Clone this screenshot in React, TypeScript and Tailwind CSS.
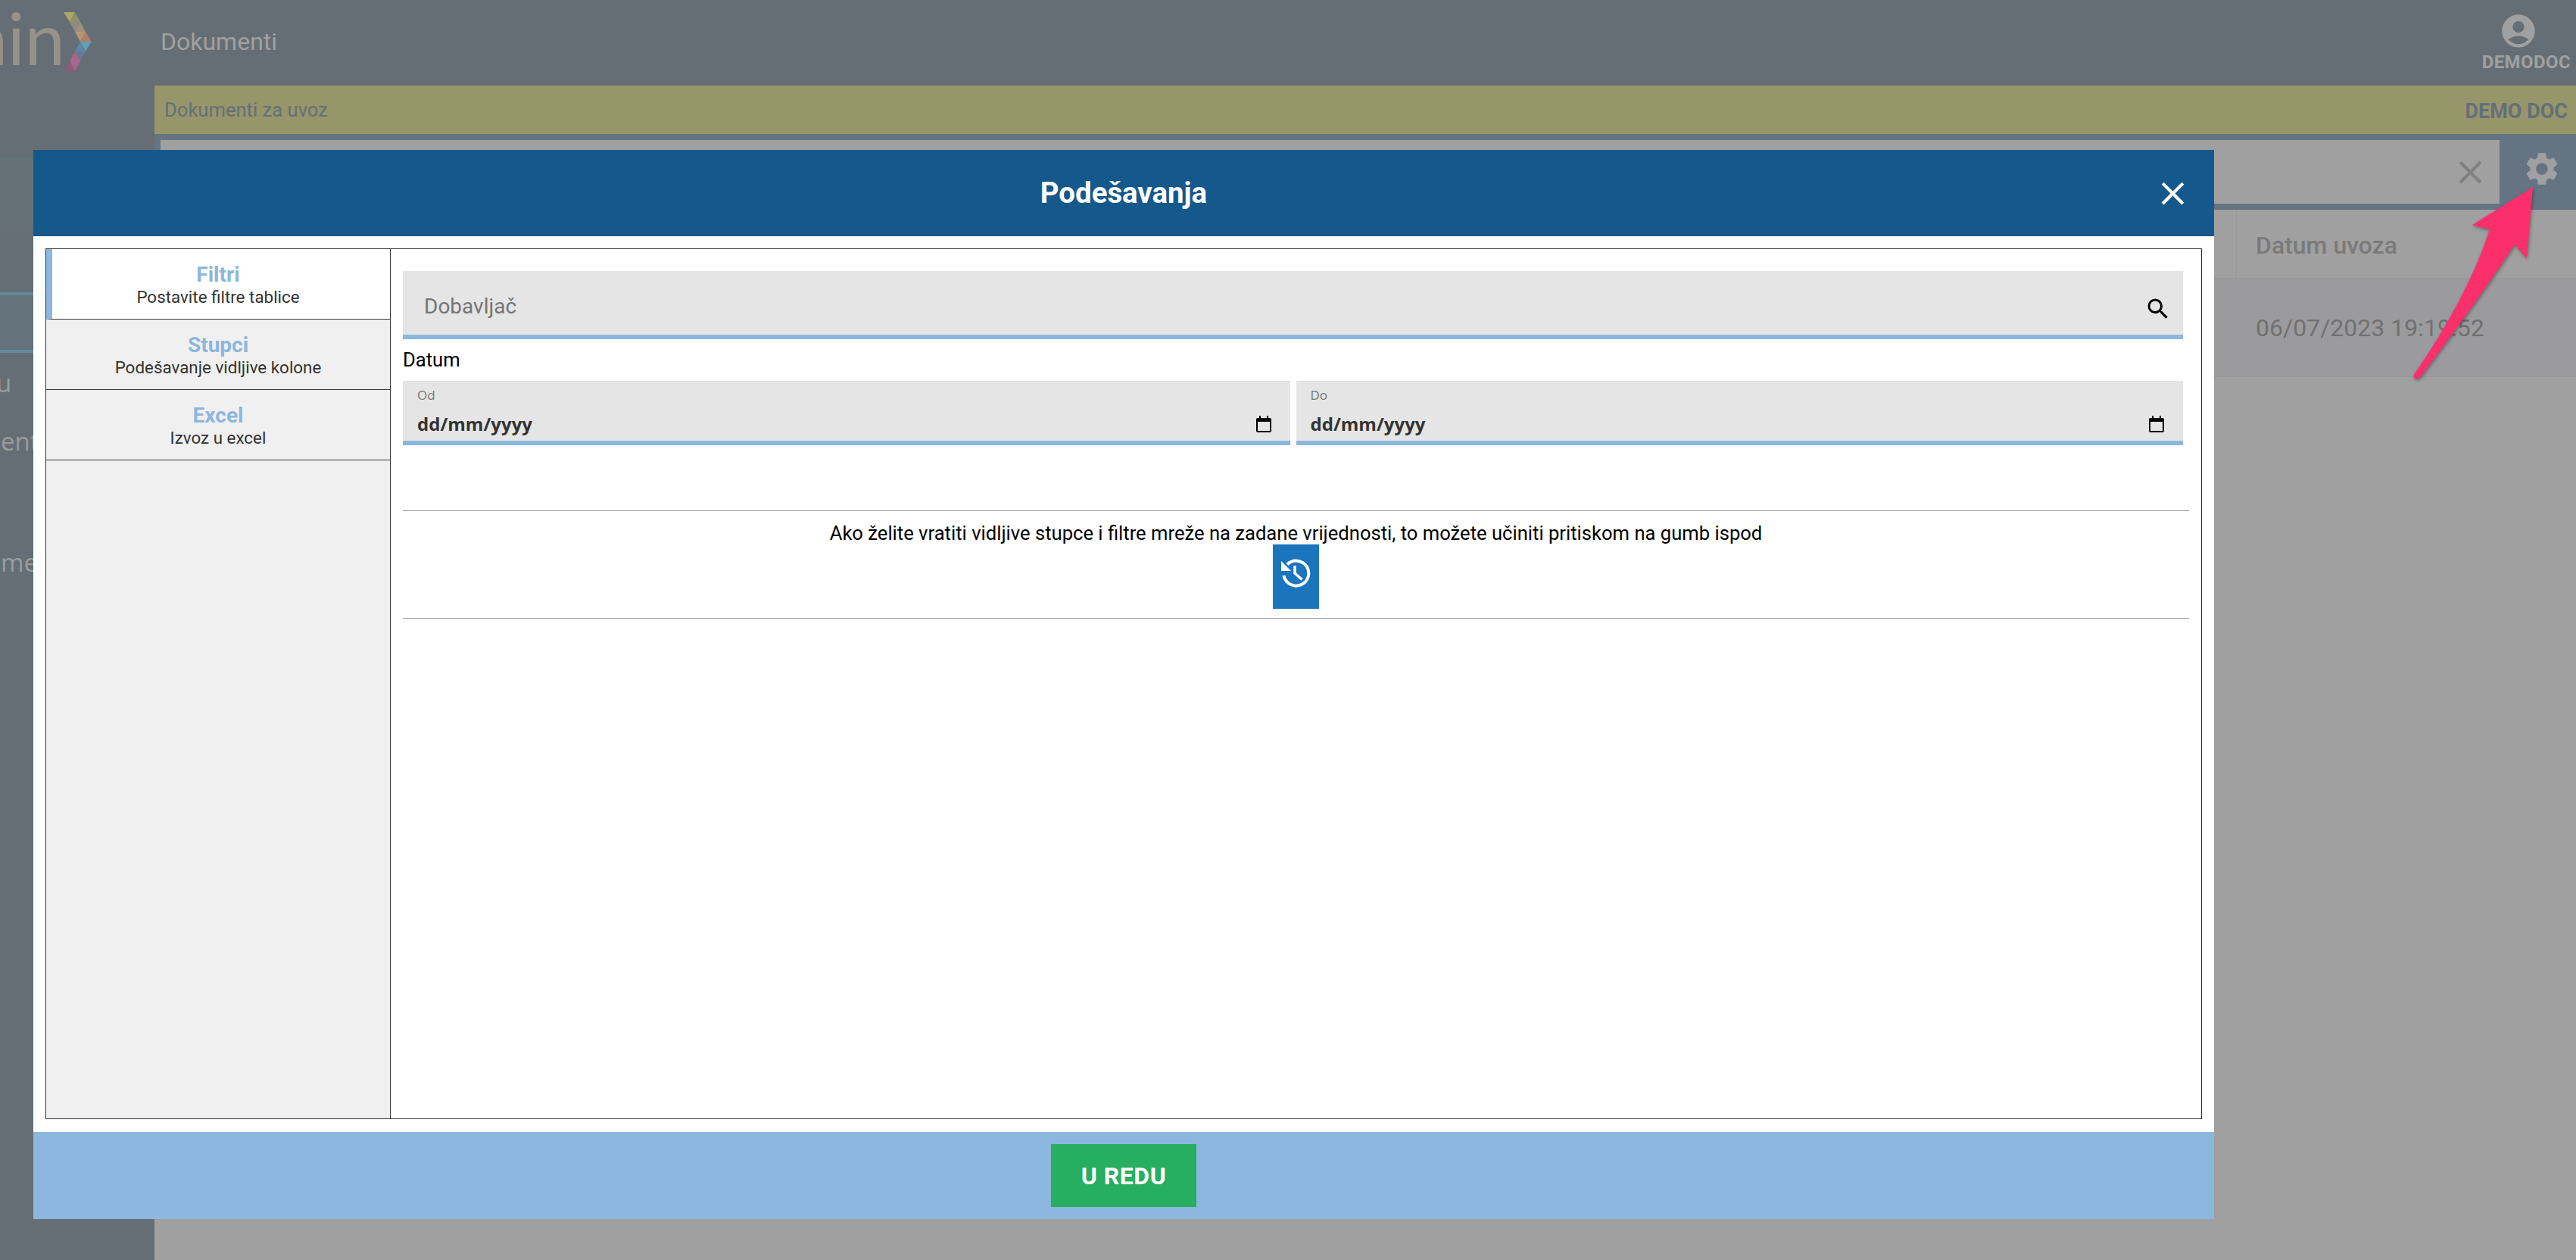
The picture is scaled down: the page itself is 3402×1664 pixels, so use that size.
import { ReactNode } from 'react';
import { MdAccountCircle, MdClose, MdSearch, MdSettings } from 'react-icons/md';

// Chrome's date picker glyph
function CalendarIcon() {
  return (
    <svg width="20" height="22" viewBox="0 0 20 22" fill="none" className="shrink-0">
      <path d="M4 0h2v3h8V0h2v3h2a2 2 0 0 1 2 2v15a2 2 0 0 1-2 2H2a2 2 0 0 1-2-2V5a2 2 0 0 1 2-2h2z" fill="#000" />
      <rect x="2" y="8" width="16" height="12" fill="#e5e5e5" />
    </svg>
  );
}

function HistoryIcon() {
  return (
    <svg width="40" height="40" viewBox="0 0 40 40" fill="none" stroke="#fff" strokeWidth="4">
      <path d="M3.5 22A16.5 16.5 0 1 0 8 7.5" />
      <polygon points="0,3 0,16 13,16" fill="#fff" stroke="none" />
      <path d="M18 9V19L27.5 27.5" strokeWidth="3.5" />
    </svg>
  );
}

function LogoChevron() {
  return (
    <svg width="40" height="80" viewBox="86 14 40 80" className="shrink-0">
      <polygon points="87,15 102,15 95,28" fill="#aaa866" />
      <polygon points="102,15 109,28 95,28" fill="#8f8f6a" />
      <polygon points="95,28 109,28 102,41" fill="#8f8a82" />
      <polygon points="109,28 116,41 102,41" fill="#a0907c" />
      <polygon points="102,41 116,41 109,54" fill="#b09a70" />
      <polygon points="116,41 124,54 109,54" fill="#b07f68" />
      <polygon points="109,54 124,54 116,67" fill="#5f9eb6" />
      <polygon points="109,54 116,67 102,67" fill="#5f86a6" />
      <polygon points="102,67 116,67 109,80" fill="#6a7796" />
      <polygon points="102,67 109,80 95,80" fill="#a86688" />
      <polygon points="95,80 109,80 102,93" fill="#a8668a" />
      <polygon points="95,80 102,93 87,93" fill="#8c5c78" />
    </svg>
  );
}

function SideItem({ children, className }: { children: ReactNode; className: string }) {
  return (
    <div className={`whitespace-nowrap text-[33px] leading-[40px] text-[#9a9c9e] [font-family:'Open_Sans',sans-serif] ${className}`}>
      {children}
    </div>
  );
}

function Sidebar() {
  return (
    <aside className="flex w-[204px] shrink-0 flex-col overflow-hidden">
      <div className="flex h-[209px] items-start">
        <div className="mt-[-8px] ml-[-43px] flex items-start">
          <span className="text-[95px] leading-[115px] text-[#96928a] [font-family:Lato,sans-serif]">nin</span>
          <div className="mt-[23px] ml-[-3px]">
            <LogoChevron />
          </div>
        </div>
      </div>
      <div className="h-[96px] bg-[#647278]" />
      <div className="h-[81px]" />
      <div className="h-[4px] bg-[#65899d]" />
      <div className="h-[72px] bg-[#64727a]" />
      <div className="h-[4px] bg-[#65899d]" />
      <SideItem className="mt-[20px] ml-[-5px]">u</SideItem>
      <SideItem className="mt-[37px] ml-[1px]">ent</SideItem>
      <SideItem className="mt-[120px] ml-[1px]">me</SideItem>
    </aside>
  );
}

function MainBehind() {
  return (
    <main className="flex min-w-0 flex-1 flex-col">
      <header className="flex h-[113px] items-start justify-between">
        <h1 className="mt-[36px] ml-[8px] text-[32px] leading-[38px] text-[#a0a0a0]">Dokumenti</h1>
        <div className="mr-[7px] flex flex-col items-end">
          <div className="mt-[15px] mr-[43px] text-[#a0a0a0]">
            <MdAccountCircle size={52} />
          </div>
          <span className="mt-[1px] text-[24px] leading-[28px] font-bold tracking-[0.4px] text-[#a0a0a0]">DEMODOC</span>
        </div>
      </header>

      <div className="flex h-[64px] items-center justify-between bg-[#96966a] pr-[11px] pl-[13px] text-[#646f78]">
        <span className="text-[25.6px]">Dokumenti za uvoz</span>
        <span className="mt-[4px] text-[27px] font-bold">DEMO DOC</span>
      </div>

      <div className="flex h-[100px] bg-[#647483] pt-[8px] pl-[8px]">
        <div className="flex h-[84px] flex-1 items-center justify-end bg-[#a0a0a0] pr-[13px] text-[#808080]">
          <MdClose size={51} />
        </div>
        <div className="flex h-[84px] w-[101px] items-center justify-center pb-[8px] pl-[11px] text-[#a0a0a0]">
          <MdSettings size={52} />
        </div>
      </div>

      <div className="flex-1 bg-[#a0a0a0]">
        <div className="flex h-[91px] border-b border-[#989898]">
          <div className="flex-1 border-r border-[#989898]" />
          <div className="flex w-[448px] items-center pt-[3px] pl-[25px] text-[32px] font-medium text-[#7a7a7a]">Datum uvoza</div>
        </div>
        <div className="flex h-[130px] items-center justify-end border-b border-[#969696] bg-[#9b9b9d]">
          <div className="w-[448px] pl-[25px] text-[32px] text-[#707070]">06/07/2023 19:19:52</div>
        </div>
      </div>
    </main>
  );
}

function Tab({ title, text, active }: { title: string; text: string; active?: boolean }) {
  return (
    <div
      className={`flex h-[93px] flex-col items-center border-b border-[#333] pt-[17px] ${
        active ? 'border-l-[8px] border-l-[#8cb7de] bg-white pr-[8px]' : 'bg-[#f0f0f0]'
      }`}
    >
      <span className="text-[28px] leading-[34px] font-bold text-[#8cb7de]">{title}</span>
      <span className="mt-[-3px] text-[22.4px] leading-[30px] text-[#333]">{text}</span>
    </div>
  );
}

function DateField({ label }: { label: string }) {
  return (
    <div className="flex h-[85px] flex-1 flex-col border-b-[6px] border-[#8cb7de] bg-[#e5e5e5] pr-[25px] pl-[19px] [font-family:'Open_Sans',sans-serif]">
      <span className="mt-[9px] text-[17px] leading-[20px] text-[#777]">{label}</span>
      <div className="mt-[14px] flex items-center justify-between">
        <span className="text-[24px] leading-[28px] font-bold text-[#333]">dd/mm/yyyy</span>
        <CalendarIcon />
      </div>
    </div>
  );
}

function SettingsModal() {
  return (
    <div className="absolute top-[198px] left-[44px] flex h-[1412px] w-[2880px] flex-col bg-white">
      <div className="flex h-[114px] items-center justify-between bg-[#15588c] px-[29px] text-white">
        <div className="w-[51px]" />
        <h2 className="text-[38.4px] font-bold">Podešavanja</h2>
        <MdClose size={51} />
      </div>

      <div className="flex min-h-0 flex-1 px-[16px] pt-[16px] pb-[17px]">
        <div className="flex flex-1 border border-[#333]">
          <div className="flex w-[455px] shrink-0 flex-col border-r border-[#333] bg-[#f0f0f0]">
            <Tab title="Filtri" text="Postavite filtre tablice" active />
            <Tab title="Stupci" text="Podešavanje vidljive kolone" />
            <Tab title="Excel" text="Izvoz u excel" />
          </div>

          <div className="flex flex-1 flex-col pt-[29px] pr-[16px] pl-[16px]">
            <div className="mr-[8px] flex h-[90px] items-center justify-between border-b-[6px] border-[#8cb7de] bg-[#e5e5e5] pr-[15px] pl-[28px]">
              <span className="mt-[10px] text-[28px] text-[#757575]">Dobavljač</span>
              <span className="mt-[16px] text-black">
                <MdSearch size={36} />
              </span>
            </div>
            <label className="mt-[12px] text-[25.6px] leading-[30px] text-black">Datum</label>
            <div className="mt-[13px] mr-[8px] flex gap-[8px]">
              <DateField label="Od" />
              <DateField label="Do" />
            </div>
            <div className="mt-[86px] flex h-[143px] flex-col items-center border-y border-[#9a9a9a] pt-[15px]">
              <p className="text-[25.6px] leading-[28px] text-black">
                Ako želite vratiti vidljive stupce i filtre mreže na zadane vrijednosti, to možete učiniti pritiskom na gumb ispod
              </p>
              <button className="mt-[1px] flex h-[85px] w-[61px] items-center justify-center bg-[#1b75bc] pb-[7px]">
                <HistoryIcon />
              </button>
            </div>
          </div>
        </div>
      </div>

      <div className="flex h-[115px] items-center justify-center bg-[#8cb7de]">
        <button className="h-[83px] w-[192px] bg-[#27ae60] text-[32px] font-bold tracking-[0.5px] text-white">U REDU</button>
      </div>
    </div>
  );
}

export default function App() {
  return (
    <div className="relative flex h-[1664px] w-[3402px] overflow-hidden bg-[#646e74] [font-family:Roboto,sans-serif]">
      <Sidebar />
      <MainBehind />
      <SettingsModal />
      {/* annotation arrow pointing at the gear */}
      <svg width="170" height="270" viewBox="0 0 170 270" className="absolute top-[240px] left-[3180px] drop-shadow-[1px_2px_2px_rgba(0,0,0,0.35)]">
        <path d="M165 7 L85 57 L108 63 Q80 150 8 255 Q6 259 10 260 Q14 261 17 257 Q90 160 141 83 L157 101 Z" fill="#fc2f6d" />
      </svg>
    </div>
  );
}
